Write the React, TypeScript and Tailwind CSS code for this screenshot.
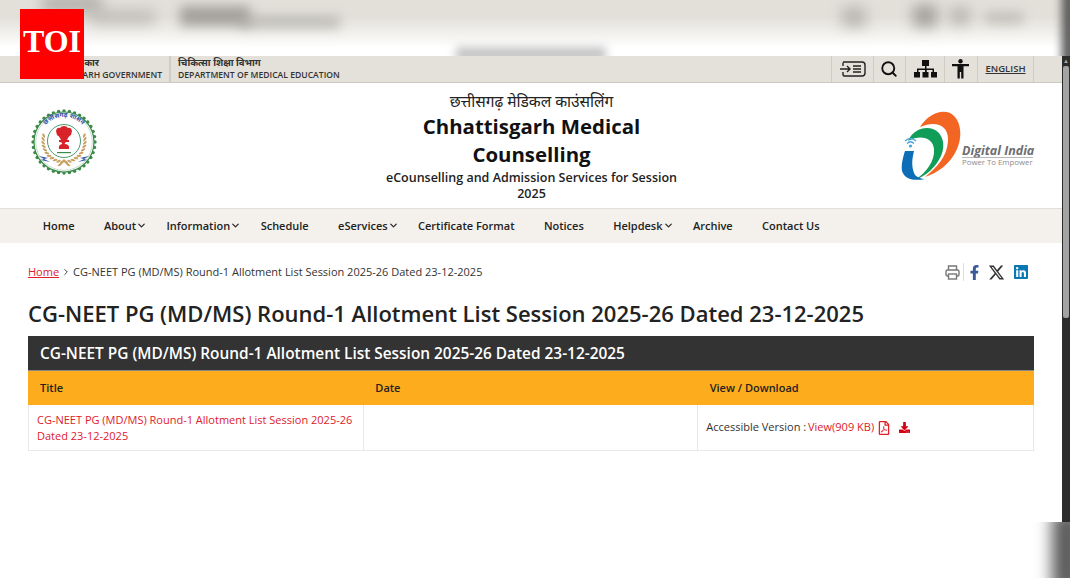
import React from "react";
import { ChevronDown, ChevronRight, Search } from "lucide-react";
import { FaRegFilePdf, FaDownload, FaFacebookF, FaLinkedin } from "react-icons/fa";

const FONT = "font-['Open_Sans','Noto_Sans','Noto_Sans_Devanagari',sans-serif]";

function Emblem() {
  const scallops = Array.from({ length: 36 }, (_, i) => (i * 360) / 36);
  const wheat = Array.from({ length: 11 }, (_, i) => i);
  return (
    <svg width="68" height="66" viewBox="0 0 68 66">
      <g fill="#3b8a4a">
        {scallops.map((a) => (
          <circle key={a} cx={34 + 31 * Math.cos((a * Math.PI) / 180)} cy={33 + 31 * Math.sin((a * Math.PI) / 180)} r="1.7" />
        ))}
      </g>
      <circle cx="34" cy="33" r="30" fill="#fff" stroke="#3b8a4a" strokeWidth="1.2" />
      <circle cx="34" cy="33" r="28.3" fill="none" stroke="#8db893" strokeWidth="0.5" />
      <defs>
        <path id="emblemArc" d="M9 33 A25 25 0 0 1 59 33" />
      </defs>
      <text fontSize="6.4" fontWeight="700" fill="#3050a8" fontFamily="'Noto Sans',sans-serif" textAnchor="middle">
        <textPath href="#emblemArc" startOffset="50%">छत्तीसगढ़ शासन</textPath>
      </text>
      <g fill="#c9a262">
        {wheat.map((i) => {
          const a = ((95 + i * 10) * Math.PI) / 180;
          const b = ((85 - i * 10) * Math.PI) / 180;
          return (
            <g key={i}>
              <ellipse cx={34 + 21 * Math.cos(a)} cy={32 + 21 * Math.sin(a)} rx="2.4" ry="1.1" transform={`rotate(${95 + i * 10 + 50} ${34 + 21 * Math.cos(a)} ${32 + 21 * Math.sin(a)})`} />
              <ellipse cx={34 + 21 * Math.cos(b)} cy={32 + 21 * Math.sin(b)} rx="2.4" ry="1.1" transform={`rotate(${85 - i * 10 - 50} ${34 + 21 * Math.cos(b)} ${32 + 21 * Math.sin(b)})`} />
            </g>
          );
        })}
      </g>
      <circle cx="34" cy="32" r="16.5" fill="#fff" stroke="#4c9c6f" strokeWidth="1" />
      <path d="M26 22 q1-4 4-3 q1-2 4-2 q3 0 4 2 q3-1 4 3 l-1 4 q-2 1-3 3 l-1 2 h-6 l-1-2 q-1-2-3-3 z" fill="#d8232a" />
      <path d="M29 31 h10 v2 h-2 q-3 .5-2 2 q5 .5 4 5 h-10 q-1-4 3-5 q1-1.500-3-2 z" fill="#d8232a" />
      <rect x="27" y="43" width="14" height="1.2" fill="#3b8a4a" />
      <path d="M9 47 l9 2 -4 1 6 3 -9-2 3-1z M59 47 l-9 2 4 1 -6 3 9-2 -3-1z" fill="#3050a8" />
      <path d="M27 57 L34 50 L41 57 L38 57 L34 53 L30 57Z" fill="#c9a262" />
    </svg>
  );
}

function DigitalIndia() {
  return (
    <svg width="134" height="72" viewBox="0 0 134 72">
      <path d="M19 16 C27 3 40 -2 49 2 C60 8 62 24 56 38 C49 54 36 62 24 66 C36 56 46 46 47 30 C48 15 36 9 19 16Z" fill="#f26522" />
      <path d="M7 30 C12 19 23 15 32 18 C42 22 45 34 40 45 C35 56 24 66 15 68 C25 62 34 50 33 38 C32 27 20 23 7 30Z" fill="#0f9d58" />
      <path d="M4 40 L13 40 C11 48 10 56 14 64 C16 66 20 68 24 68 C14 70 4 69 1 60 C0 54 2 46 4 40Z" fill="#0d6db7" />
      <circle cx="9.500" cy="35" r="1.600" fill="#4aa3df" />
      <path d="M4 30 Q9.500 25 15 30 M6 32.500 Q9.500 29 13 32.500" stroke="#4aa3df" strokeWidth="1.300" fill="none" />
      <text x="61" y="44" fontSize="12.500" fontWeight="700" fontStyle="italic" fill="#6d6e71" fontFamily="'Open Sans',sans-serif">Digital India</text>
      <line x1="61" y1="46.500" x2="132" y2="46.500" stroke="#9a9b9e" strokeWidth="0.700" />
      <text x="61" y="54" fontSize="7.800" fill="#8a8b8e" fontFamily="'Open Sans',sans-serif">Power To Empower</text>
    </svg>
  );
}

function NavItem({ label, drop }: { label: string; drop?: boolean }) {
  return (
    <a className={`flex items-center text-[11px] font-semibold text-[#222] ${drop ? "pl-[14.700px] pr-[4.700px]" : "px-[14.700px]"}`}>
      {label}
      {drop && <ChevronDown size={11} strokeWidth={2.600} className="-mt-[2px]" />}
    </a>
  );
}

function Util({ className, children }: { className: string; children: React.ReactNode }) {
  return <div className={`flex items-center justify-center border-l border-[#cfccc5] h-full ${className}`}>{children}</div>;
}

export default function App() {
  return (
    <div className={`relative w-[1070px] h-[578px] overflow-hidden bg-white ${FONT}`}>
      {/* blurred page top */}
      <div className="relative h-14 overflow-hidden bg-gradient-to-b from-[#e3e0da] from-30% to-white to-85%">
        <div className="absolute left-[42px] -top-[4px] w-[60px] h-[16px] bg-[#9c9a94] blur-[7px] opacity-70" />
        <div className="absolute left-[90px] top-[10px] w-[65px] h-[14px] bg-[#a8a6a0] blur-[7px] opacity-60" />
        <div className="absolute left-[180px] top-[6px] w-[70px] h-[20px] bg-[#94928c] blur-[6px] opacity-80" />
        <div className="absolute left-[240px] top-[16px] w-[100px] h-[12px] bg-[#aaa8a2] blur-[6px] opacity-70" />
        <div className="absolute left-[456px] top-[47px] w-[150px] h-[14px] bg-[#b4b4b6] blur-[5px] opacity-80" />
        <div className="absolute left-[842px] top-[7px] w-[24px] h-[20px] bg-[#a8a6a0] blur-[7px] opacity-70" />
        <div className="absolute left-[913px] top-[5px] w-[24px] h-[22px] bg-[#94928c] blur-[7px] opacity-80" />
        <div className="absolute left-[950px] top-[7px] w-[20px] h-[18px] bg-[#a8a6a0] blur-[7px] opacity-70" />
        <div className="absolute left-[985px] top-[12px] w-[38px] h-[12px] bg-[#aaa8a2] blur-[6px] opacity-60" />
        <div className="absolute left-[1062px] -top-[10px] w-[14px] h-[80px] bg-[#555] blur-[5px]" />
      </div>

      <div className="flex h-[466px]">
        <div className="w-[1062px] flex flex-col">
          {/* top utility bar */}
          <div className="h-[27px] shrink-0 flex items-stretch justify-between bg-[#e4e1da] border-b border-[#cbc9c3] pl-[28px] pr-[28px]">
            <div className="flex items-center">
              <div className="w-[141px] text-right pr-[7px] leading-[13px]">
                <div className="text-[9.500px] font-bold text-[#333] pr-[63px]">कार</div>
                <div className="text-[8.600px] text-[#333] font-semibold whitespace-nowrap">CHHATTISGARH GOVERNMENT</div>
              </div>
              <div className="border-l-2 border-[#cfccc5] h-full pl-[7px] leading-[13px] flex flex-col justify-center">
                <div className="text-[9.500px] font-bold text-[#333]">चिकित्सा शिक्षा विभाग</div>
                <div className="text-[8.600px] text-[#333] font-semibold whitespace-nowrap">DEPARTMENT OF MEDICAL EDUCATION</div>
              </div>
            </div>
            <div className="flex items-stretch border-r border-[#cfccc5]">
              <Util className="w-[42px]">
                <svg width="26" height="16" viewBox="0 0 26 16" fill="none" stroke="#222" strokeWidth="1.400">
                  <path d="M3 1h19a3 3 0 0 1 3 3v8a3 3 0 0 1-3 3H4l-1-1V11" />
                  <path d="M3 5V1.500" />
                  <path d="M0 8h10M7 5l3 3-3 3" />
                  <path d="M13 5h8M13 8h8M13 11h8" />
                </svg>
              </Util>
              <Util className="w-[32px]"><Search size={18} strokeWidth={2.500} color="#111" className="-ml-[2px]" /></Util>
              <Util className="w-[39px]">
                <svg width="23" height="18" viewBox="0 0 23 18" fill="#111">
                  <rect x="8" y="0" width="7" height="6" />
                  <rect x="11" y="6" width="1.500" height="6" />
                  <path d="M3 12V8.500h17V12h-1.500V10h-6v2H11v-2H4.500v2z" />
                  <rect x="0" y="12" width="6" height="5.500" />
                  <rect x="8.500" y="12" width="6" height="5.500" />
                  <rect x="17" y="12" width="6" height="5.500" />
                </svg>
              </Util>
              <Util className="w-[33px]">
                <svg width="17" height="20" viewBox="0 0 17 20" fill="#111" className="-ml-[1px]">
                  <circle cx="8.500" cy="2.200" r="2.200" />
                  <path d="M0 5h17v2.200h-5.500V19.500H9.200V13H7.800v6.500H5.500V7.200H0z" />
                </svg>
              </Util>
              <Util className="w-[56px]">
                <a className="text-[9.500px] font-semibold text-[#333] underline">ENGLISH</a>
              </Util>
            </div>
          </div>

          {/* header */}
          <div className="h-[125px] shrink-0 flex items-center justify-between pl-[30px] pr-[27px]">
            <div className="w-[68px] -mt-[8px]"><Emblem /></div>
            <div className="w-[320px] ml-[64px] text-center text-[#111] mt-[1px]">
              <div className="text-[15.500px] leading-[22px] text-[#222]">छत्तीसगढ़ मेडिकल काउंसलिंग</div>
              <div className="text-[20.400px] leading-[28px] font-bold">Chhattisgarh Medical Counselling</div>
              <div className="text-[12.500px] leading-[16px] font-semibold text-[#222] mt-[2px]">eCounselling and Admission Services for Session 2025</div>
            </div>
            <div className="w-[134px] mt-[3px]"><DigitalIndia /></div>
          </div>

          {/* nav */}
          <nav className="h-[35px] shrink-0 flex items-stretch bg-[#f4f1ec] border-t border-[#e2e0db] pl-[28px]">
            <NavItem label="Home" />
            <NavItem label="About" drop />
            <NavItem label="Information" drop />
            <NavItem label="Schedule" />
            <NavItem label="eServices" drop />
            <NavItem label="Certificate Format" />
            <NavItem label="Notices" />
            <NavItem label="Helpdesk" drop />
            <NavItem label="Archive" />
            <NavItem label="Contact Us" />
          </nav>

          {/* content */}
          <main className="px-[28px] pt-[20px]">
            <div className="flex items-center justify-between h-[18px]">
              <div className="flex items-center text-[11px] text-[#333]">
                <a className="text-[#e0202a] underline">Home</a>
                <ChevronRight size={10} strokeWidth={2.200} className="mx-[2px]" />
                <span>CG-NEET PG (MD/MS) Round-1 Allotment List Session 2025-26 Dated 23-12-2025</span>
              </div>
              <div className="flex items-center pr-[5px]">
                <svg width="15" height="15" viewBox="0 0 15 15" fill="none" stroke="#777" strokeWidth="1.400" className="mr-[3px]">
                  <path d="M3.500 5V1h8v4" />
                  <rect x="1" y="5" width="13" height="6" rx="1.500" />
                  <rect x="3.500" y="9" width="8" height="5" fill="#fff" />
                </svg>
                <div className="w-px h-[18px] bg-[#ddd] mr-[3px]" />
                <FaFacebookF size={15} color="#3b5998" className="mr-[6px]" />
                <svg width="17" height="17" viewBox="0 0 24 24" fill="#333" className="mr-[8px]">
                  <path d="M18.244 2.250h3.308l-7.227 8.260 8.502 11.240H16.170l-5.214-6.817L4.990 21.750H1.680l7.730-8.835L1.254 2.250H8.080l4.713 6.231zm-1.161 17.520h1.833L7.084 4.126H5.117z" />
                </svg>
                <FaLinkedin size={16} color="#0a78b5" />
              </div>
            </div>

            <h1 className="text-[22px] leading-[30px] font-semibold text-[#222] mt-[17px] whitespace-nowrap">
              CG-NEET PG (MD/MS) Round-1 Allotment List Session 2025-26 Dated 23-12-2025
            </h1>

            <div className="mt-[8px] h-[35px] bg-[#333] flex items-center px-[12px] pt-[1px] text-[15.400px] font-semibold text-white border-b border-[#888]">
              CG-NEET PG (MD/MS) Round-1 Allotment List Session 2025-26 Dated 23-12-2025
            </div>
            <div className="grid grid-cols-3 h-[34px] bg-[#fcac1c] items-center text-[11px] font-semibold text-[#222]">
              <div className="pl-[12px]">Title</div>
              <div className="pl-[12px]">Date</div>
              <div className="pl-[11px]">View / Download</div>
            </div>
            <div className="grid grid-cols-3 h-[46px] border border-t-0 border-[#e8e8e8] text-[11px]">
              <div className="pl-[8px] pr-[8px] flex items-center text-[#e0202a] leading-[16px] border-r border-[#e8e8e8]">
                CG-NEET PG (MD/MS) Round-1 Allotment List Session 2025-26 Dated 23-12-2025
              </div>
              <div className="border-r border-[#e8e8e8]" />
              <div className="pl-[8px] flex items-center text-[#333]">
                <span>Accessible Version :&nbsp;</span>
                <span className="text-[#e0202a] -ml-[1px]">View(909 KB)</span>
                <FaRegFilePdf size={14} color="#e0202a" className="ml-[3px]" />
                <FaDownload size={11} color="#d40012" className="ml-[8px]" />
              </div>
            </div>
          </main>
        </div>

        {/* scrollbar */}
        <div className="w-2 bg-[#2c2c2c] flex flex-col items-center">
          <div className="h-[10px] w-full flex items-center justify-center text-[6px] text-[#aaa] leading-none">▲</div>
          <div className="w-[6px] h-[252px] bg-[#a3a3a3] rounded-[2px]" />
        </div>
      </div>

      {/* blurred page bottom */}
      <div className="relative h-14 bg-white overflow-hidden">
        <div className="absolute left-[1052px] -top-[10px] w-[30px] h-[80px] bg-[#5a5a5a] blur-[8px]" />
      </div>

      {/* TOI badge */}
      <div className="absolute left-[20px] top-[9px] w-[64px] h-[70px] bg-[#ff0000] flex items-center justify-center">
        <span className="font-['Liberation_Serif',serif] font-bold text-[32px] leading-none text-white -mt-[6px]">TOI</span>
      </div>
    </div>
  );
}
